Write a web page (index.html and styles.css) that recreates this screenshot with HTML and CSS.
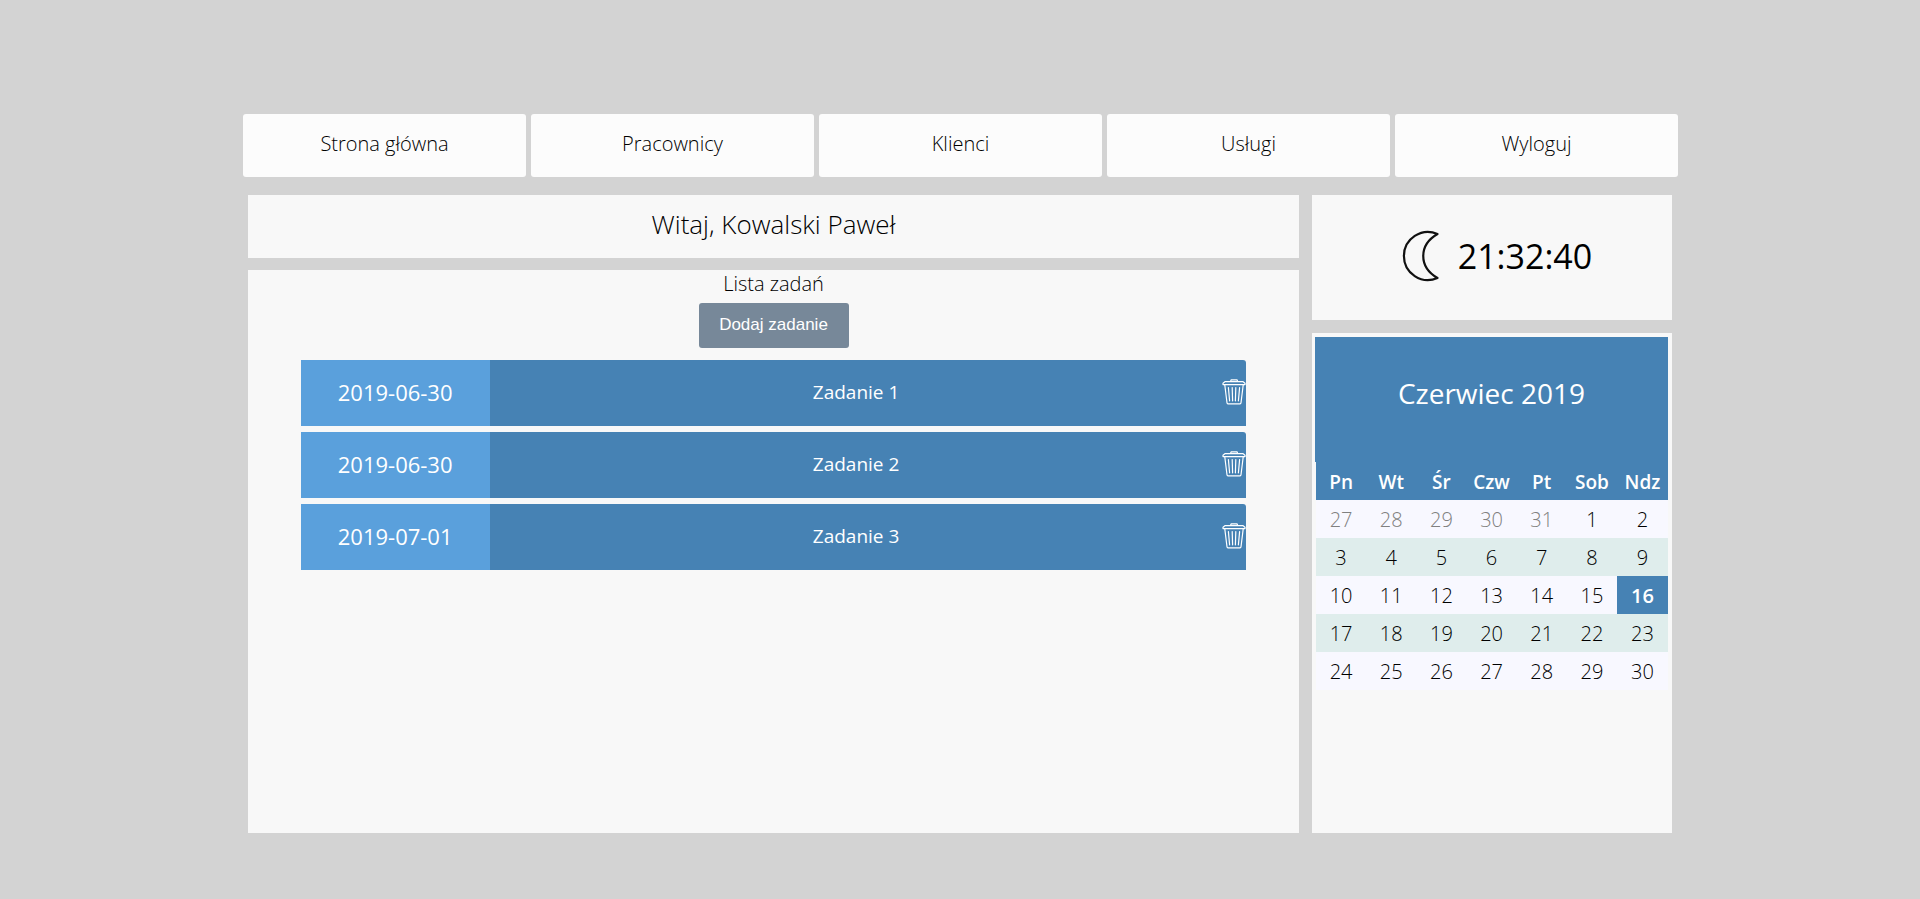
FILE: index.html
```html
<!DOCTYPE html>
<html lang="pl">
<head>
<meta charset="utf-8">
<title>Lista zadań</title>
<link rel="stylesheet" href="styles.css">
</head>
<body>
<svg class="sprite" aria-hidden="true">
  <symbol id="trash" viewBox="0 0 24 28">
    <g fill="none" stroke="#fff" stroke-width="1.2" stroke-linejoin="round" stroke-linecap="round">
      <path d="M8.600 2.200 9.200 .8h5.800l.6 1.400"/>
      <path d="M1 5.600V4.200L3.200 2.600h17.600l2.200 1.600v1.400z"/>
      <path d="M2.800 6 5 23.800q.1 1 1 1h12q.9 0 1-1l2.200-17.800"/>
      <path d="M6.400 8.600 7.600 21.800M10.200 8.600l.4 13.200M13.800 8.600l-.4 13.200M17.600 8.600l-1.200 13.200"/>
    </g>
  </symbol>
</svg>
<div class="page">
  <nav class="menu">
    <a class="menu-link" href="#">Strona główna</a>
    <a class="menu-link" href="#">Pracownicy</a>
    <a class="menu-link" href="#">Klienci</a>
    <a class="menu-link" href="#">Usługi</a>
    <a class="menu-link" href="#">Wyloguj</a>
  </nav>
  <div class="columns">
    <main class="content">
      <h1 class="panel welcome">Witaj, Kowalski Paweł</h1>
      <section class="panel tasks">
        <h2 class="tasks-title">Lista zadań</h2>
        <button class="add" type="button">Dodaj zadanie</button>
        <ul class="task-list">
          <li class="task"><time class="task-date">2019-06-30</time><span class="task-name">Zadanie 1</span><button class="remove" type="button" aria-label="Usuń zadanie 1"><svg class="trash"><use href="#trash"/></svg></button></li>
          <li class="task"><time class="task-date">2019-06-30</time><span class="task-name">Zadanie 2</span><button class="remove" type="button" aria-label="Usuń zadanie 2"><svg class="trash"><use href="#trash"/></svg></button></li>
          <li class="task"><time class="task-date">2019-07-01</time><span class="task-name">Zadanie 3</span><button class="remove" type="button" aria-label="Usuń zadanie 3"><svg class="trash"><use href="#trash"/></svg></button></li>
        </ul>
      </section>
    </main>
    <aside class="side">
      <section class="panel clock">
        <svg class="moon" viewBox="0 0 37 52" aria-hidden="true"><path d="M35.500 4A24 24 0 1 0 35.500 48C16.500 37 16.500 15 35.500 4Z" fill="none" stroke="#111" stroke-width="2.200" stroke-linejoin="round"/></svg>
        <time>21:32:40</time>
      </section>
      <section class="panel calendar">
        <h2 class="month">Czerwiec 2019</h2>
        <table class="days">
          <thead><tr><th>Pn</th><th>Wt</th><th>Śr</th><th>Czw</th><th>Pt</th><th>Sob</th><th class="last">Ndz</th></tr></thead>
          <tbody>
            <tr><td class="other">27</td><td class="other">28</td><td class="other">29</td><td class="other">30</td><td class="other">31</td><td>1</td><td>2</td></tr>
            <tr><td>3</td><td>4</td><td>5</td><td>6</td><td>7</td><td>8</td><td>9</td></tr>
            <tr><td>10</td><td>11</td><td>12</td><td>13</td><td>14</td><td>15</td><td class="today">16</td></tr>
            <tr><td>17</td><td>18</td><td>19</td><td>20</td><td>21</td><td>22</td><td>23</td></tr>
            <tr><td>24</td><td>25</td><td>26</td><td>27</td><td>28</td><td>29</td><td>30</td></tr>
          </tbody>
        </table>
      </section>
    </aside>
  </div>
</div>
</body>
</html>
```
FILE: styles.css
```css
* { box-sizing: border-box; }
body {
  margin: 0;
  background: #d3d3d3;
  color: #000;
  font-family: "Open Sans", "Noto Sans", sans-serif;
  font-size: 20px;
  font-weight: 300;
}
h1, h2, ul { margin: 0; padding: 0; font-weight: 300; }
.sprite { display: none; }
.page {
  display: flex;
  flex-direction: column;
  width: 75%;
  min-height: 100vh;
  margin: 0 auto;
  padding: 114px 0 66px;
}
.menu { display: flex; gap: 5px; padding: 0 2px 0 3px; }
.menu-link {
  flex: 1;
  padding: 16px 0 19px;
  border-radius: 3px;
  background: #fcfcfc;
  color: #000;
  line-height: 28px;
  text-align: center;
  text-decoration: none;
}
.columns { display: flex; flex: 1; gap: 13px; margin-top: 18px; padding: 0 8px; }
.content { display: flex; flex: 1; flex-direction: column; gap: 12px; }
.side { display: flex; flex: 0 0 360px; flex-direction: column; gap: 13px; }
.panel { background: #f8f8f8; }
.welcome { padding: 13px 0 18px; font-size: 26px; line-height: 32px; text-align: center; }
.tasks { display: flex; flex: 1; flex-direction: column; align-items: center; }
.tasks-title { font-size: 20px; line-height: 28px; }
.add {
  width: 150px;
  margin: 5px 0 12px;
  padding: 11px 0 12px;
  border: 0;
  border-radius: 3px;
  background: #778899;
  color: #fff;
  font: 17px/22px "Liberation Sans", Arial, sans-serif;
}
.task-list { display: flex; flex-direction: column; gap: 6px; width: 90%; list-style: none; }
.task {
  display: flex;
  align-items: stretch;
  border-radius: 0 3px 0 0;
  overflow: hidden;
  background: #4682b4;
  color: #fff;
  font-weight: 400;
  line-height: 64px;
  padding: 0;
  text-align: center;
}
.task-date { width: 20%; padding-bottom: 2px; background: #5aa0dc; font-size: 22px; }
.task-name { flex: 1; font-size: 19px; }
.remove { width: 24px; padding: 0; border: 0; background: none; }
.trash { display: block; width: 24px; height: 28px; }
.clock { display: flex; align-items: center; justify-content: center; gap: 19px; height: 125px; padding: 0 0 3px 10px; font-size: 34px; font-weight: 400; line-height: 48px; }
.moon { width: 37px; height: 52px; }
.calendar { flex: 1; padding: 4px 4px 0 3px; }
.month { background: #4682b4; color: #fff; font-size: 28px; font-weight: 400; line-height: 40px; padding: 36px 0 49px; text-align: center; }
.days { width: calc(100% - 1px); margin-left: 1px; border-collapse: collapse; table-layout: fixed; text-align: center; line-height: 36px; }
.days th, .days td { padding: 2px 0 0; }
.days th { background: #4682b4; color: #fff; font-size: 19px; font-weight: 600; }
.days .last { width: 51px; }
.days tr { background: #f8f8ff; }
.days tr:nth-child(even) { background: #dfedec; }
.days .other { color: #808080; }
.days .today { background: #4682b4; color: #fff; font-weight: 600; }
```
